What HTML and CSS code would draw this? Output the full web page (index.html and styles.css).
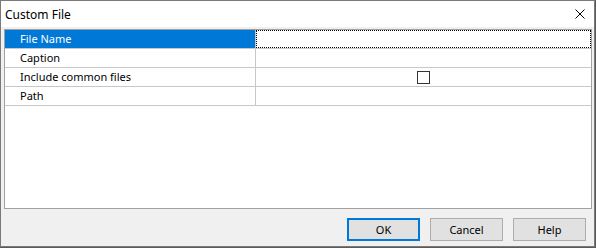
FILE: index.html
```html
<!DOCTYPE html>
<html lang="en">
<head>
  <meta charset="UTF-8" />
  <title>Custom File</title>
  <link rel="stylesheet" href="styles.css">
</head>
<body>

  <div class="dialog">
    <!-- Title bar -->
    <div class="titlebar">
      <span class="title">Custom File</span>
      <span class="close">
        <svg width="10" height="10" viewBox="0 0 10 10">
          <path d="M0.5 0.5 L9.5 9.5 M9.5 0.5 L0.5 9.5" stroke="#000" stroke-width="1" fill="none"/>
        </svg>
      </span>
    </div>

    <div class="content">
      <!-- Property grid -->
      <div class="grid">
        <div class="row selected">
          <div class="label">File Name</div>
          <div class="value"><div class="focus"></div></div>
        </div>
        <div class="row">
          <div class="label">Caption</div>
          <div class="value"></div>
        </div>
        <div class="row">
          <div class="label">Include common files</div>
          <div class="value center"><span class="checkbox"></span></div>
        </div>
        <div class="row">
          <div class="label">Path</div>
          <div class="value"></div>
        </div>
      </div>

      <div class="buttons">
        <button class="btn default">OK</button>
        <button class="btn">Cancel</button>
        <button class="btn">Help</button>
      </div>
    </div>
  </div>

</body>
</html>
```

FILE: styles.css
```css
body {
  margin: 0;
  padding: 0;
  background-color: #5a5a5a;
  font-family: 'Noto Sans', 'Liberation Sans', sans-serif;
  font-size: 11px;
  color: #000;
}

.dialog {
  width: 593px;
  height: 245px;
  border: 1px solid #7a7a7a;
  background-color: #f0f0f0;
  display: flex;
  flex-direction: column;
}

.titlebar {
  height: 26px;
  background-color: #fff;
  display: flex;
  align-items: center;
  justify-content: space-between;
  padding: 0 8px 0 4px;
}

.title {
  font-size: 12px;
  padding-top: 1px;
}

.close {
  display: flex;
  margin-right: 1px;
}

.content {
  flex: 1;
  display: flex;
  flex-direction: column;
  padding: 2px 2px 0 3px;
}

.grid {
  height: 178px;
  border: 1px solid #a0a0a0;
  background-color: #fff;
}

.row {
  display: flex;
  height: 18px;
  border-bottom: 1px solid #c8c8c8;
}

.label {
  width: 235px;
  padding-left: 15px;
  border-right: 1px solid #c8c8c8;
  line-height: 18px;
}

.value {
  flex: 1;
  display: flex;
  align-items: center;
}

.value.center {
  justify-content: flex-start;
  padding-left: 161px;
}

.selected .label {
  background-color: #0078d7;
  color: #fff;
}

.focus {
  width: 100%;
  height: 100%;
  box-sizing: border-box;
  border: 1px dotted #000;
}

.checkbox {
  width: 11px;
  height: 11px;
  border: 1px solid #333;
  background-color: #fff;
}

.buttons {
  display: flex;
  justify-content: flex-end;
  gap: 10px;
  padding: 9px 6px 0 0;
}

.btn {
  width: 73px;
  height: 23px;
  box-sizing: border-box;
  background-color: #e1e1e1;
  border: 1px solid #adadad;
  font-family: 'Noto Sans', 'Liberation Sans', sans-serif;
  font-size: 11px;
  color: #000;
  padding: 0;
}

.btn.default {
  border: 2px solid #0078d7;
}
```
